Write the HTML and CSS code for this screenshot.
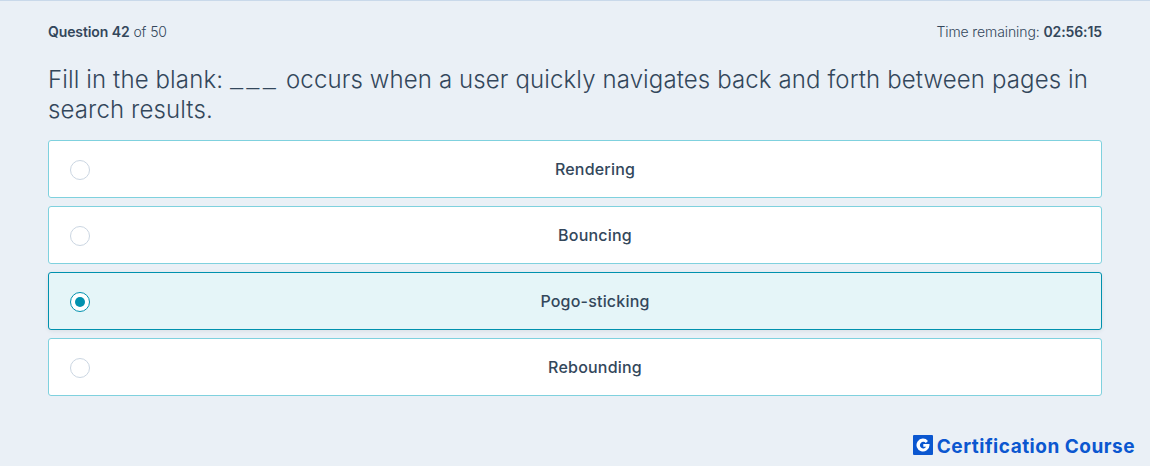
FILE: index.html
```html
<!DOCTYPE html>
<html lang="en">
  <head>
    <meta charset="UTF-8" />
    <meta name="viewport" content="width=device-width, initial-scale=1.0" />
    <title>Certification Exam</title>
    <link rel="stylesheet" href="styles.css">
  </head>
  <body>
    <div class="quiz">
      <div class="status">
        <div><strong>Question 42</strong> of 50</div>
        <div>Time remaining: <strong>02:56:15</strong></div>
      </div>
      <h1 class="question">Fill in the blank: <span class="blank">___</span> occurs when a user quickly navigates back and forth between pages in<br>search results.</h1>
      <div class="answers">
        <div class="answer"><span class="radio"></span><span class="label">Rendering</span></div>
        <div class="answer"><span class="radio"></span><span class="label">Bouncing</span></div>
        <div class="answer selected"><span class="radio"></span><span class="label">Pogo-sticking</span></div>
        <div class="answer"><span class="radio"></span><span class="label">Rebounding</span></div>
      </div>
    </div>
    <div class="brand">
      <svg class="brand-icon" viewBox="0 0 20 20" aria-hidden="true">
        <rect width="20" height="20" rx="1" fill="#0b57d0" />
        <path d="M15 5.900A6.500 6.500 0 1 0 16.500 10.200V9H10.300V11.800H13.100A3.300 3.300 0 1 1 12.800 8.100Z" fill="#fff" />
      </svg>
      <span>Certification Course</span>
    </div>
  </body>
</html>
```

FILE: styles.css
```css
body {
  margin: 0;
  height: 466px;
  box-sizing: border-box;
  border-top: 1px solid #c9d9ea;
  background-color: #eaf0f6;
  color: #33475b;
  font-family: Inter, Arial, sans-serif;
  display: flex;
  flex-direction: column;
  overflow: hidden;
}

.quiz {
  padding: 0 48px;
}

.status {
  display: flex;
  justify-content: space-between;
  align-items: center;
  height: 20px;
  margin-top: 20px;
  font-size: 14px;
  font-weight: 350;
  letter-spacing: -0.1px;
}

.status strong {
  font-weight: 600;
}

.question {
  margin: 24px 0 15px;
  font-size: 24px;
  line-height: 30px;
  font-weight: 300;
  letter-spacing: 0.12px;
}

.blank {
  display: inline-block;
  font-size: 30px;
  line-height: 20px;
  font-weight: 200;
  letter-spacing: 3.2px;
}

.answers {
  display: flex;
  flex-direction: column;
  gap: 8px;
}

.answer {
  position: relative;
  height: 58px;
  box-sizing: border-box;
  display: flex;
  align-items: center;
  justify-content: center;
  padding-left: 40px;
  background-color: #fff;
  border: 1px solid #7fd1de;
  border-radius: 3px;
}

.answer.selected {
  background-color: #e5f5f8;
  border-color: #0091ae;
  box-shadow: 0 1px 4px rgba(0, 0, 0, 0.08);
}

.label {
  font-size: 16px;
  font-weight: 500;
  letter-spacing: 0.2px;
}

.radio {
  position: absolute;
  left: 21px;
  top: 19px;
  width: 20px;
  height: 20px;
  box-sizing: border-box;
  border: 1px solid #cbd6e2;
  border-radius: 50%;
  background-color: #fff;
}

.selected .radio {
  border-color: #0091ae;
}

.selected .radio::after {
  content: "";
  position: absolute;
  left: 4px;
  top: 4px;
  width: 10px;
  height: 10px;
  border-radius: 50%;
  background-color: #0091ae;
}

.brand {
  margin-top: auto;
  margin-bottom: 8px;
  padding-right: 15px;
  display: flex;
  justify-content: flex-end;
  align-items: center;
  gap: 4px;
  color: #0b57d0;
  font-size: 19px;
  font-weight: 700;
  letter-spacing: 0.5px;
}

.brand span {
  padding-top: 4px;
}

.brand-icon {
  width: 20px;
  height: 20px;
}
```
